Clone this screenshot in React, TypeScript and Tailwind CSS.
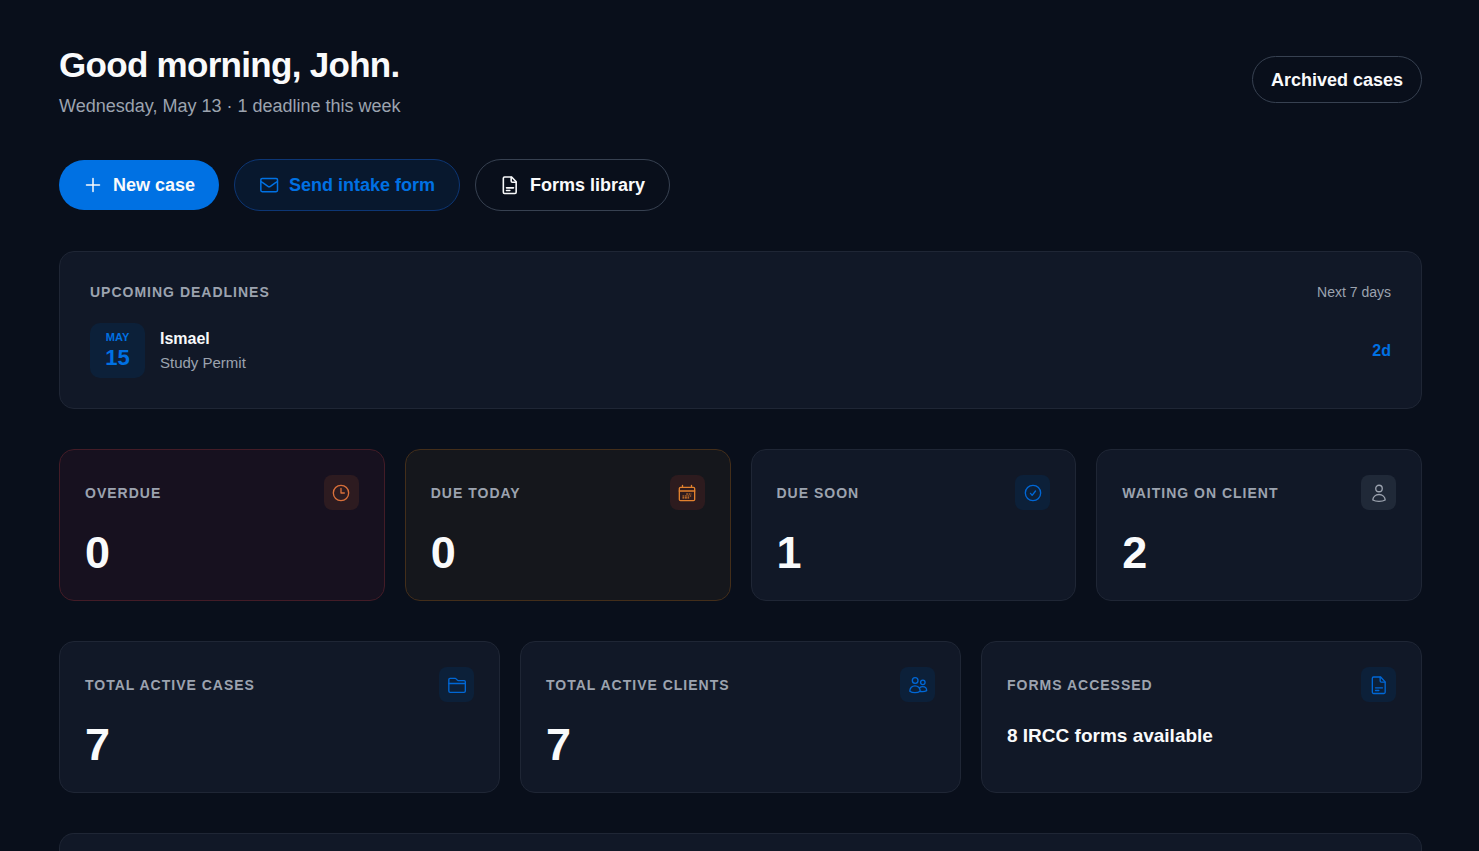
import clsx from "clsx";
import type { ReactNode } from "react";

const Icon = ({ children }: { children: ReactNode }) => (
  <svg
    viewBox="0 0 24 24"
    fill="none"
    stroke="currentColor"
    strokeWidth={1.6}
    strokeLinecap="round"
    strokeLinejoin="round"
    aria-hidden="true"
    className="size-5 shrink-0"
  >
    {children}
  </svg>
);

const PlusIcon = () => (
  <Icon>
    <path d="M12 4.2v15.6M4.2 12h15.6" strokeWidth={1.8} />
  </Icon>
);

const MailIcon = () => (
  <Icon>
    <rect x="2.2" y="4.2" width="20" height="15.8" rx="1.6" strokeWidth={1.8} />
    <path
      d="M2.4 8c3.2 2 6.2 4.2 8.6 5.8.8.5 1.6.5 2.4 0 2.4-1.6 5.4-3.8 8.6-5.8"
      strokeWidth={1.8}
    />
  </Icon>
);

const DocumentIcon = ({ bold }: { bold?: boolean }) => (
  <Icon>
    <g strokeWidth={bold ? 1.9 : 1.6}>
      <path d="M14 2.4H5.4A1.4 1.4 0 0 0 4 3.8v17a1.4 1.4 0 0 0 1.4 1.4H18a1.4 1.4 0 0 0 1.4-1.4V8.2z" />
      <path d="M13.4 2.6v4.6a1.4 1.4 0 0 0 1.4 1.4h4.4M7.8 15.4h8.4M7.8 18.6h4" />
    </g>
  </Icon>
);

const ClockIcon = () => (
  <Icon>
    <circle cx="12" cy="12" r="9.2" />
    <path d="M12 6.6V12h4" />
  </Icon>
);

const CalendarIcon = () => (
  <Icon>
    <rect x="2.8" y="5.2" width="18.4" height="16" rx="1.4" />
    <path d="M2.8 9.6h18.4M6.6 2.8v2.4M17.4 2.8v2.4" />
    <path
      d="M11 13.2h6.4M6.6 15.6h10.4M6.6 17.8h8"
      strokeWidth={1.3}
      strokeDasharray="2.2 0.8"
      strokeLinecap="butt"
    />
  </Icon>
);

const CheckIcon = () => (
  <Icon>
    <circle cx="12" cy="12" r="9.2" />
    <path d="M9 12.4l2 2.4 4-5.2" />
  </Icon>
);

const PersonIcon = () => (
  <Icon>
    <circle cx="12" cy="6.6" r="3.9" />
    <path d="M12 13.8c-4.2 0-7.4 3-7.4 6.6 2 1.2 4.6 1.6 7.4 1.6s5.4-.4 7.4-1.6c0-3.6-3.2-6.6-7.4-6.6z" />
  </Icon>
);

const FolderIcon = () => (
  <Icon>
    <path d="M2.2 10.2V5.4A1.4 1.4 0 0 1 3.6 4h6.2c.5 0 .9.2 1.2.6l1.4 1.6c.3.4.7.6 1.2.6h7a1.4 1.4 0 0 1 1.4 1.4v2" />
    <path d="M2.2 10.2H22v9a1.6 1.6 0 0 1-1.6 1.6H3.8a1.6 1.6 0 0 1-1.6-1.6z" />
  </Icon>
);

const PeopleIcon = () => (
  <Icon>
    <circle cx="8.6" cy="6.6" r="3.4" />
    <circle cx="17.8" cy="8.8" r="2.7" />
    <path d="M8.4 13c-3.6 0-6.2 2.6-6.2 6.4 1.6 1.2 3.6 1.8 6.2 1.8s4.6-.6 6.2-1.8c0-3.8-2.6-6.4-6.2-6.4z" />
    <path d="M14 15.2c1-.9 2.2-1.3 3.6-1.3 2.8 0 4.8 2 4.8 4.8-1.8 1.1-4.4 1.5-7.4 1.1" />
  </Icon>
);

type StatProps = {
  label: string;
  value: string;
  icon: ReactNode;
  tone?: "blue" | "red" | "amber" | "gray";
  small?: boolean;
};

const cardTones = {
  blue: "border-[#1f2635] bg-[#111827]",
  gray: "border-[#1f2635] bg-[#111827]",
  red: "border-[#431c27] bg-[#17111f]",
  amber: "border-[#432e1a] bg-[#15171c]",
};

const iconTones = {
  blue: "bg-[#0c2039] text-[#0067d6]",
  gray: "bg-[#202938] text-[#9ca3af]",
  red: "bg-[#2d1b20] text-[#d9703a]",
  amber: "bg-[#2d1b1e] text-[#e2812e]",
};

const Stat = ({ label, value, icon, tone = "blue", small }: StatProps) => (
  <section className={clsx("rounded-[15px] border p-[25px]", cardTones[tone])}>
    <div className="flex items-center justify-between">
      <h2 className="text-sm font-bold tracking-[1px] text-[#9ca3af] uppercase">{label}</h2>
      <span
        className={clsx("flex size-[35px] items-center justify-center rounded-lg", iconTones[tone])}
      >
        {icon}
      </span>
    </div>
    {small ? (
      <p className="mt-5 text-[19px] leading-7 font-bold text-gray-50">{value}</p>
    ) : (
      <p className="mt-5 text-[45px] leading-[45px] font-bold text-gray-50">{value}</p>
    )}
  </section>
);

const App = () => {
  return (
    <main className="flex min-h-screen flex-col gap-10 bg-[#090f1b] pt-10 pr-[57px] pl-[59px] font-['Liberation_Sans',Arial,sans-serif] text-gray-50">
      <header className="flex items-center justify-between">
        <div>
          <h1 className="text-[35px] leading-[50px] font-bold tracking-[-0.02em]">
            Good morning, John.
          </h1>
          <p className="mt-1 text-lg leading-[25px] text-[#9ca3af]">
            Wednesday, May 13 · 1 deadline this week
          </p>
        </div>
        <button
          type="button"
          className="h-[47px] rounded-full border border-[#374151] px-[18px] text-lg font-bold"
        >
          Archived cases
        </button>
      </header>

      <div className="flex items-center gap-[15px]">
        <button
          type="button"
          className="flex h-[50px] items-center gap-2.5 rounded-full bg-[#0071e3] px-6 text-lg font-bold"
        >
          <PlusIcon />
          New case
        </button>
        <button
          type="button"
          className="flex h-[52px] items-center gap-2.5 rounded-full border border-[#0d3674] bg-[#08182e] px-6 text-lg font-bold text-[#0071e3]"
        >
          <MailIcon />
          Send intake form
        </button>
        <button
          type="button"
          className="flex h-[52px] items-center gap-2.5 rounded-full border border-[#374151] px-6 text-lg font-bold"
        >
          <DocumentIcon bold />
          Forms library
        </button>
      </div>

      <section className="rounded-[15px] border border-[#1f2635] bg-[#111827] p-[30px]">
        <div className="flex items-center justify-between">
          <h2 className="text-sm leading-[21px] font-bold tracking-[1px] text-[#9ca3af] uppercase">
            Upcoming deadlines
          </h2>
          <span className="text-sm leading-[21px] text-[#9ca3af]">Next 7 days</span>
        </div>
        <div className="mt-5 flex items-center gap-[15px]">
          <div className="flex size-[55px] flex-col items-center justify-center rounded-[10px] bg-[#0c2039] font-bold text-[#0071e3]">
            <span className="text-[11px] leading-[14px] uppercase">May</span>
            <span className="text-[22px] leading-[27px]">15</span>
          </div>
          <div className="flex-1">
            <p className="text-base leading-6 font-bold">Ismael</p>
            <p className="text-[15px] leading-[23px] text-[#9ca3af]">Study Permit</p>
          </div>
          <span className="text-base font-bold text-[#0071e3]">2d</span>
        </div>
      </section>

      <div className="grid grid-cols-4 gap-5">
        <Stat label="Overdue" value="0" tone="red" icon={<ClockIcon />} />
        <Stat label="Due today" value="0" tone="amber" icon={<CalendarIcon />} />
        <Stat label="Due soon" value="1" icon={<CheckIcon />} />
        <Stat label="Waiting on client" value="2" tone="gray" icon={<PersonIcon />} />
      </div>

      <div className="grid grid-cols-3 gap-5">
        <Stat label="Total active cases" value="7" icon={<FolderIcon />} />
        <Stat label="Total active clients" value="7" icon={<PeopleIcon />} />
        <Stat label="Forms accessed" value="8 IRCC forms available" small icon={<DocumentIcon />} />
      </div>

      {/* next section, continues past the fold */}
      <section className="flex-1 rounded-t-[15px] border border-b-0 border-[#1f2635] bg-[#111827]" />
    </main>
  );
};

export default App;
